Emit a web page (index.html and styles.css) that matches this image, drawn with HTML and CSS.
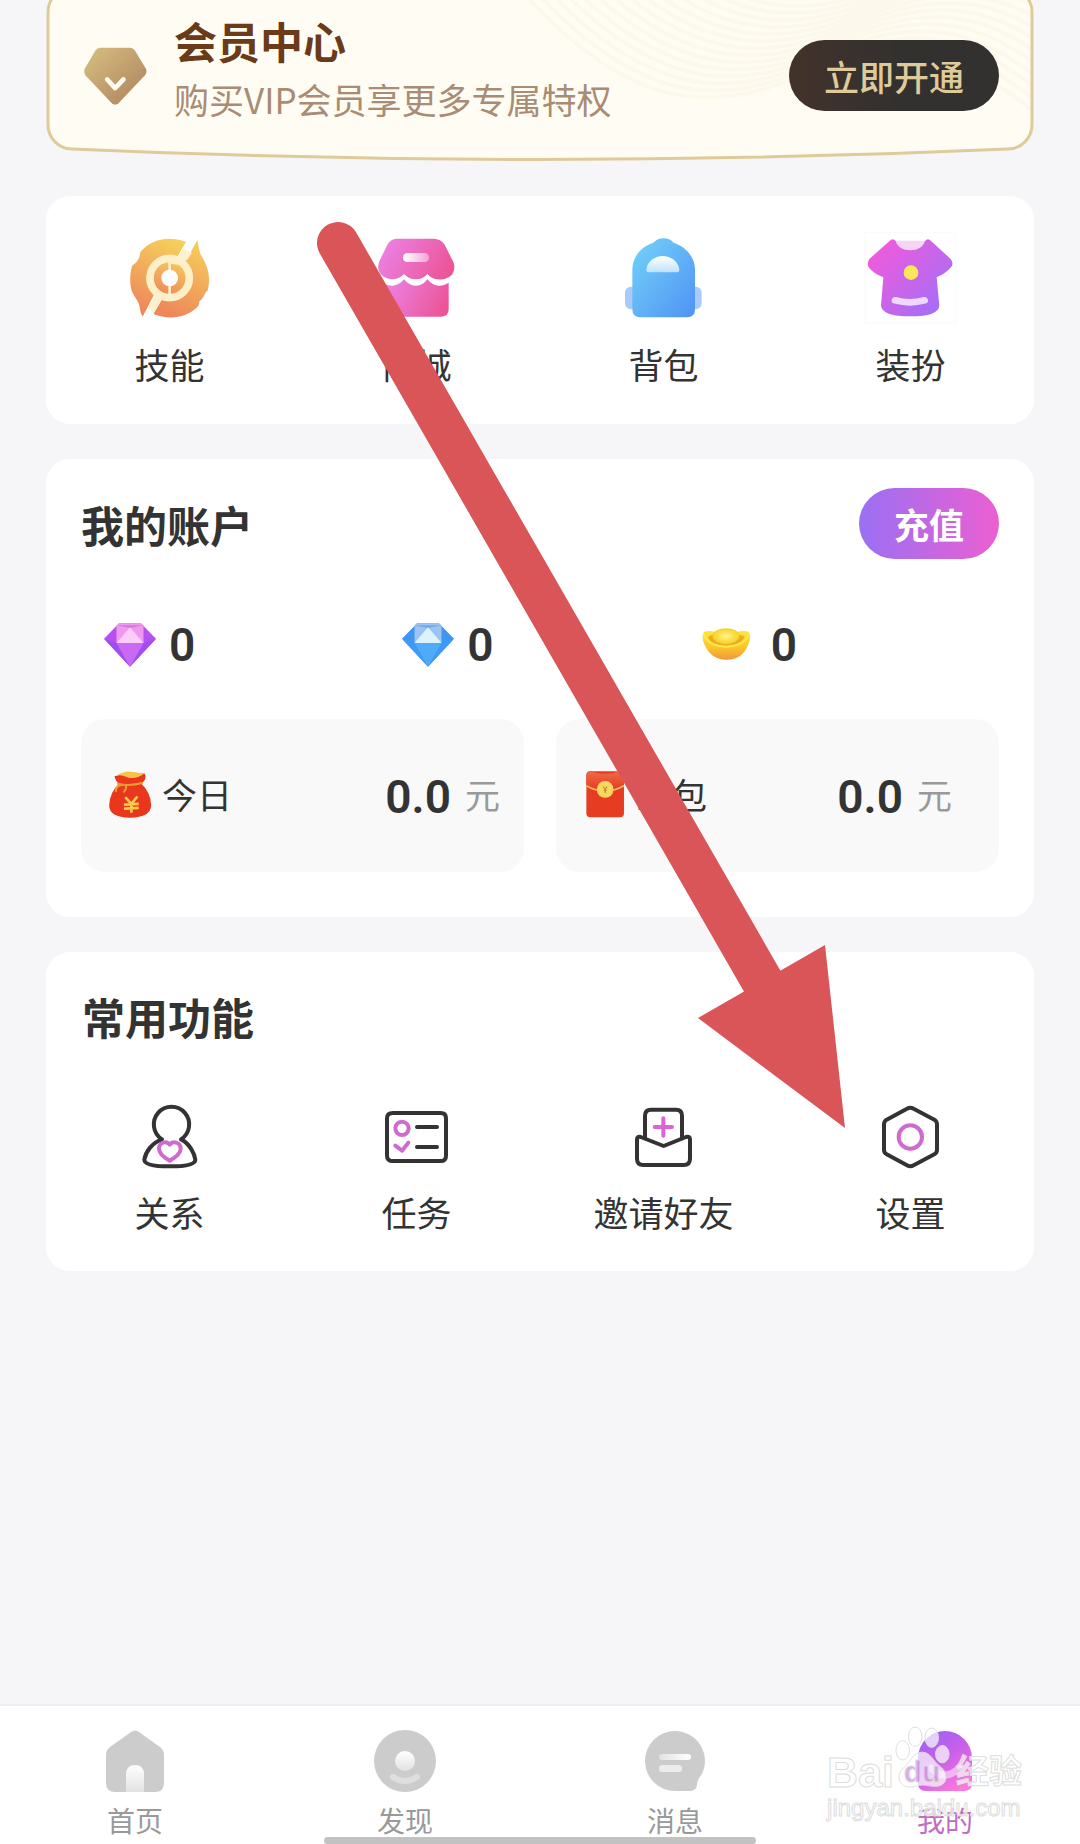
FILE: index.html
```html
<!DOCTYPE html>
<html lang="zh-CN">
<head>
    <meta charset="UTF-8">
    <meta name="viewport" content="width=device-width, initial-scale=1.0">
    <title>我的</title>
    <link rel="stylesheet" href="styles.css">
</head>
<body>
    <main class="container">
        <section class="vip-card">
            <svg class="vip-bg" viewBox="0 0 988 160" preserveAspectRatio="none" aria-hidden="true">
                <defs>
                    <clipPath id="vipClip"><path d="M2 12A24 24 0 0 1 26 -12H962A24 24 0 0 1 986 12V124A24 24 0 0 1 962 148Q494 169 26 148A24 24 0 0 1 2 124Z"/></clipPath>
                    <path id="wave" d="M484 0C540 60 600 97 660 97C740 97 780 50 860 52C920 54 960 90 1000 120"/>
                </defs>
                <path d="M2 12A24 24 0 0 1 26 -12H962A24 24 0 0 1 986 12V124A24 24 0 0 1 962 148Q494 169 26 148A24 24 0 0 1 2 124Z" fill="#fffdf3"/>
                <g clip-path="url(#vipClip)" fill="none" stroke="#fcf8ec" stroke-width="4">
                    <use href="#wave"/>
                    <use href="#wave" x="7" y="-7"/>
                    <use href="#wave" x="14" y="-14"/>
                    <use href="#wave" x="21" y="-21"/>
                    <use href="#wave" x="28" y="-28"/>
                    <use href="#wave" x="35" y="-35"/>
                    <use href="#wave" x="42" y="-42"/>
                    <use href="#wave" x="49" y="-49"/>
                    <use href="#wave" x="56" y="-56"/>
                    <use href="#wave" x="63" y="-63"/>
                    <use href="#wave" x="70" y="-70"/>
                    <use href="#wave" x="77" y="-77"/>
                    <use href="#wave" x="84" y="-84"/>
                    <use href="#wave" x="91" y="-91"/>
                </g>
                <path d="M2 12A24 24 0 0 1 26 -12H962A24 24 0 0 1 986 12V124A24 24 0 0 1 962 148Q494 169 26 148A24 24 0 0 1 2 124Z" fill="none" stroke="#dfcb9a" stroke-width="3"/>
            </svg>
            <svg class="vip-icon" viewBox="0 0 190 175" aria-hidden="true">
                <defs><linearGradient id="gold" x1="0" y1="0" x2="1" y2="1"><stop offset="0.1" stop-color="#d4ba7c"/><stop offset="0.8" stop-color="#b48c65"/></linearGradient></defs>
                <path d="M48 2H140Q148 2 153 10L186 64Q192 75 184 85L104 170Q94 178 84 170L4 85Q-2 75 3 64L35 10Q40 2 48 2Z" fill="url(#gold)"/>
                <path d="M70 98L94 124L119 98" fill="none" stroke="#fffdf3" stroke-width="14" stroke-linecap="round" stroke-linejoin="round"/>
            </svg>
            <div class="vip-text">
                <h2>会员中心</h2>
                <p>购买VIP会员享更多专属特权</p>
            </div>
            <button type="button" class="btn-open">立即开通</button>
        </section>

        <section class="card menu">
            <a href="#" class="menu-item">
                <svg class="icon-lg" viewBox="0 0 240 240" aria-hidden="true">
                    <defs><linearGradient id="fire" x1="0.75" y1="0" x2="0.4" y2="1"><stop offset="0" stop-color="#f6cf5c"/><stop offset="1" stop-color="#ee875a"/></linearGradient></defs>
                    <path d="M168 12C110 -10 60 8 31 42L29 54C22 74 14 76 6 84C-2 112 0 142 5 158C14 180 28 190 29 208Q31 226 38 236Z" fill="url(#fire)"/>
                    <path d="M202 6C206 18 206 44 218 60C240 96 240 130 233 158C222 164 226 176 208 190C208 200 206 204 202 207C166 242 116 246 70 228Z" fill="url(#fire)"/>
                    <path d="M168 14L200 8L172 62L146 52ZM38 236L70 228L96 180L72 170Z" fill="#fff"/>
                    <path d="M159 32L186 44L170 68L146 54ZM82 164L55 208L70 228L96 182Z" fill="#fdf1cd"/>
                    <circle cx="119" cy="120" r="59" fill="url(#fire)" stroke="#fdf0c8" stroke-width="23"/>
                    <path d="M119 62V176" stroke="#fdf0c8" stroke-width="8"/>
                    <path d="M122 62L146 80L124 78Z" fill="#fdf0c8"/>
                    <circle cx="119" cy="120" r="25" fill="#fff"/>
                </svg>
                <span>技能</span>
            </a>
            <a href="#" class="menu-item">
                <svg class="icon-lg" viewBox="-3 -2 240 240" aria-hidden="true">
                    <defs>
                        <linearGradient id="shop" x1="0" y1="0.3" x2="1" y2="0.6"><stop offset="0" stop-color="#eb82e6"/><stop offset="1" stop-color="#ec5496"/></linearGradient>
                        <linearGradient id="shine"><stop offset="0" stop-color="#fff"/><stop offset="1" stop-color="#fff" stop-opacity="0.4"/></linearGradient>
                    </defs>
                    <path d="M56 0H170Q190 2 200 18L226 70Q234 90 222 108Q205 124 180 122Q162 122 148 106Q135 122 113 122Q92 122 78 106Q64 122 40 122Q10 118 2 95Q-2 85 4 68L28 18Q38 0 56 0Z" fill="url(#shop)"/>
                    <path d="M14 134Q30 142 45 141Q66 138 78 122Q95 142 113 141Q135 141 148 122Q165 142 185 141Q200 140 212 132V212Q212 234 190 234H36Q14 234 14 212Z" fill="url(#shop)"/>
                    <rect x="75" y="43" width="78" height="27" rx="13" fill="url(#shine)"/>
                </svg>
                <span>商城</span>
            </a>
            <a href="#" class="menu-item">
                <svg class="icon-lg" viewBox="-3 0 240 240" aria-hidden="true">
                    <defs>
                        <linearGradient id="pack" x1="0.1" y1="0.1" x2="1" y2="1"><stop offset="0" stop-color="#6fcdf9"/><stop offset="1" stop-color="#5092f4"/></linearGradient>
                        <linearGradient id="flap" x1="0" y1="0" x2="0" y2="1"><stop offset="0" stop-color="#fff"/><stop offset="1" stop-color="#bfe2fc"/></linearGradient>
                    </defs>
                    <rect x="0" y="146" width="50" height="68" rx="18" fill="#a9cbfa"/>
                    <rect x="180" y="146" width="50" height="68" rx="18" fill="#a9cbfa"/>
                    <path d="M22 95C22 55 50 25 85 14Q98 1 115 1Q135 1 146 14C180 25 210 55 210 95V214Q210 238 186 238H46Q22 238 22 214Z" fill="url(#pack)"/>
                    <path d="M64 95C66 70 90 54 113 54C138 54 160 70 163 95Q163 103 155 103H72Q64 103 64 95Z" fill="url(#flap)"/>
                </svg>
                <span>背包</span>
            </a>
            <a href="#" class="menu-item">
                <svg class="icon-lg" viewBox="2 0 240 240" aria-hidden="true">
                    <defs><linearGradient id="shirt" x1="0.1" y1="0.1" x2="0.9" y2="0.8"><stop offset="0" stop-color="#f05bdc"/><stop offset="1" stop-color="#a86df6"/></linearGradient></defs>
                    <rect x="-16" y="-16" width="272" height="272" fill="none" stroke="#fbfbfb" stroke-width="4"/>
                    <path d="M74 8H166C156 46 84 46 74 8Z" fill="#f5d5f4"/>
                    <path d="M62 5Q70 1 76 9C86 46 154 46 164 9Q170 1 178 5L240 62Q252 75 242 88Q225 108 199 118L207 203Q204 235 121 235Q35 235 32 203L39 118Q10 108 -5 88Q-12 75 -2 62Z" fill="url(#shirt)"/>
                    <circle cx="122" cy="104" r="22" fill="#fbe85a"/>
                    <path d="M74 187Q119 199 163 187" fill="none" stroke="#fff" stroke-opacity="0.75" stroke-width="20" stroke-linecap="round"/>
                </svg>
                <span>装扮</span>
            </a>
        </section>

        <section class="card account">
            <div class="account-head">
                <h3>我的账户</h3>
                <button type="button" class="btn-recharge">充值</button>
            </div>
            <div class="coins">
                <div class="coin">
                    <svg class="coin-icon" viewBox="0 -12 158 156" aria-hidden="true">
                        <path d="M46 0H112L158 47L79 132L0 47Z" fill="#b850f0"/>
                        <path d="M0 47L38 60L79 132ZM158 47L120 60L79 132Z" fill="#a04df2"/>
                        <path d="M38 6L46 0H112L120 6V60H38Z" fill="#ee98ee"/>
                        <path d="M38 6H120L79 14Z" fill="#d277e8"/>
                        <path d="M79 12L120 60H38Z" fill="#fbcdf8"/>
                        <path d="M38 60H120L79 132Z" fill="#c96af5"/>
                    </svg>
                    <b>0</b>
                </div>
                <div class="coin">
                    <svg class="coin-icon" viewBox="0 -12 158 156" aria-hidden="true">
                        <path d="M46 0H112L158 47L79 132L0 47Z" fill="#3d96f2"/>
                        <path d="M0 47L38 60L79 132ZM158 47L120 60L79 132Z" fill="#3c9bf6"/>
                        <path d="M38 6L46 0H112L120 6V60H38Z" fill="#9cc4f3"/>
                        <path d="M38 6H120L79 14Z" fill="#6fa8ea"/>
                        <path d="M79 12L120 60H38Z" fill="#dcf2fd"/>
                        <path d="M38 60H120L79 132Z" fill="#4fabf7"/>
                    </svg>
                    <b>0</b>
                </div>
                <div class="coin coin-gold">
                    <svg class="coin-icon" viewBox="0 -26 158 156" aria-hidden="true">
                        <defs>
                            <linearGradient id="ingot" x1="0" y1="0" x2="0" y2="1"><stop offset="0" stop-color="#fdea3c"/><stop offset="0.6" stop-color="#fbc62c"/><stop offset="1" stop-color="#f0963a"/></linearGradient>
                            <radialGradient id="ingotTop"><stop offset="0" stop-color="#fff58c"/><stop offset="1" stop-color="#f8d023"/></radialGradient>
                        </defs>
                        <path d="M14 10Q30 8 42 12Q76 -6 110 12Q124 8 140 10Q152 14 148 38Q132 96 78 97Q24 96 6 38Q2 14 14 10Z" fill="url(#ingot)"/>
                        <path d="M22 26Q76 2 132 26Q124 52 76 54Q28 52 22 26Z" fill="#eeaa20"/>
                        <ellipse cx="76" cy="25" rx="41" ry="24" fill="url(#ingotTop)"/>
                        <path d="M8 20Q22 56 76 57Q130 56 146 20" fill="none" stroke="#fde94a" stroke-width="6"/>
                    </svg>
                    <b>0</b>
                </div>
            </div>
            <div class="wallets">
                <div class="wallet">
                    <svg class="wallet-icon" viewBox="0 0 128 140" aria-hidden="true">
                        <path d="M18 16Q64 0 108 8Q116 22 98 38Q126 64 127 102Q126 138 64 139Q2 138 2 102Q4 62 32 38Q20 30 18 16Z" fill="#e8371d"/>
                        <path d="M28 12Q50 -6 88 6Q104 4 104 10Q84 24 60 20Q42 12 28 12Z" fill="#f8c447"/>
                        <path d="M28 38Q64 46 100 36M44 42Q22 42 22 60M52 44Q54 54 46 62" fill="none" stroke="#ee9a2c" stroke-width="6" stroke-linecap="round"/>
                        <path d="M50 78L68 98L86 76M68 98V124M46 100L90 98M46 112L90 110" fill="none" stroke="#fccb4b" stroke-width="8"/>
                    </svg>
                    <span class="wallet-name">今日</span>
                    <b>0.0</b>
                    <span class="unit">元</span>
                </div>
                <div class="wallet wallet-packet">
                    <svg class="wallet-icon" viewBox="0 0 113 140" aria-hidden="true">
                        <defs><linearGradient id="packet" x1="0" y1="0" x2="0" y2="1"><stop offset="0" stop-color="#ee6a45"/><stop offset="1" stop-color="#e23a20"/></linearGradient></defs>
                        <rect x="1" y="1" width="112" height="137" rx="12" fill="#e63c22"/>
                        <path d="M1 13Q1 1 13 1Q56 16 101 1Q113 1 113 13V44Q56 76 1 44Z" fill="url(#packet)"/>
                        <path d="M1 44Q56 76 113 44" fill="none" stroke="#f7b75d" stroke-width="5"/>
                        <circle cx="57" cy="55" r="25" fill="#f9d75e"/>
                        <path d="M51 46L57 55L63 46M57 55V66M52 57H62" fill="none" stroke="#b9862d" stroke-width="3"/>
                    </svg>
                    <span class="wallet-name">红包</span>
                    <b>0.0</b>
                    <span class="unit">元</span>
                </div>
            </div>
        </section>

        <section class="card functions">
            <h3>常用功能</h3>
            <div class="menu menu-tools">
                <a href="#" class="menu-item">
                    <svg class="icon-md" viewBox="2 0 192 192" aria-hidden="true">
                        <path d="M74 103A53 53 0 1 1 131 103C158 116 172 148 174 164Q174 184 97 184Q21 184 21 164C25 140 45 112 74 103" stroke="#333"/>
                        <path d="M97 167C85 160 65 147 65 131C65 111 88 106 97 119C106 106 130 111 130 131C130 147 109 160 97 167Z" stroke="#cf6bd0"/>
                    </svg>
                    <span>关系</span>
                </a>
                <a href="#" class="menu-item">
                    <svg class="icon-md" viewBox="2 0 192 192" aria-hidden="true">
                        <path d="M26 24H169Q185 24 185 40V152Q185 168 169 168H26Q8 168 8 152V40Q8 24 26 24ZM98 66H158M98 126H158" stroke="#333"/>
                        <path d="M33 70A20 20 0 1 1 73 70A20 20 0 1 1 33 70ZM33 122L53 137L72 113" stroke="#cf6bd0"/>
                    </svg>
                    <span>任务</span>
                </a>
                <a href="#" class="menu-item">
                    <svg class="icon-md" viewBox="2 0 192 192" aria-hidden="true">
                        <path d="M41 100V32Q41 14 59 14H134Q152 14 152 32V100" stroke="#333"/>
                        <path d="M17 103Q17 93 28 96L97 123L164 96Q176 93 176 103V161Q176 180 157 180H36Q17 180 17 161Z" stroke="#333"/>
                        <path d="M70 66H122M96 40V92" stroke="#db65d6"/>
                    </svg>
                    <span>邀请好友</span>
                </a>
                <a href="#" class="menu-item">
                    <svg class="icon-md" viewBox="2 0 192 192" aria-hidden="true">
                        <path d="M86 11Q96 5 106 11L168 44Q176 49 176 58V134Q176 143 168 148L106 181Q96 187 86 181L25 148Q17 143 17 134V58Q17 49 25 44Z" stroke="#333"/>
                        <circle cx="96" cy="96" r="35" stroke="#cf6bd0"/>
                    </svg>
                    <span>设置</span>
                </a>
            </div>
        </section>
    </main>

    <nav class="tabbar">
        <a href="#" class="tab">
            <svg class="tab-icon" viewBox="0 0 62 62" aria-hidden="true">
                <defs><linearGradient id="fade" x1="0" y1="0" x2="0" y2="1"><stop offset="0" stop-color="#fff"/><stop offset="1" stop-color="#e2e2e2"/></linearGradient></defs>
                <path d="M27 2Q31 -1 35 2L56 17Q60 20 60 25V53Q60 62 51 62H11Q2 62 2 53V25Q2 20 6 17Z" fill="#ccc"/>
                <path d="M22 62V43Q23 35 31 35Q39 35 40 43V62Z" fill="url(#fade)"/>
            </svg>
            <span>首页</span>
        </a>
        <a href="#" class="tab">
            <svg class="tab-icon" viewBox="0 0 62 62" aria-hidden="true">
                <circle cx="31" cy="31" r="31" fill="#ccc"/>
                <circle cx="31" cy="31" r="10" fill="url(#fade)"/>
                <path d="M19 47Q31 55 43 47" fill="none" stroke="#dedede" stroke-width="6" stroke-linecap="round"/>
            </svg>
            <span>发现</span>
        </a>
        <a href="#" class="tab">
            <svg class="tab-icon" viewBox="0 0 62 62" aria-hidden="true">
                <defs><linearGradient id="line"><stop offset="0" stop-color="#e2e2e2"/><stop offset="1" stop-color="#fff"/></linearGradient></defs>
                <path d="M31 1A30 30 0 0 1 58 44Q53 50 53 54Q53 61 46 61H31A30 30 0 0 1 31 1Z" fill="#ccc"/>
                <rect x="15" y="24" width="32" height="6" rx="3" fill="url(#line)"/>
                <rect x="15" y="35" width="23" height="7" rx="3" fill="#ececec"/>
            </svg>
            <span>消息</span>
        </a>
        <a href="#" class="tab active">
            <svg class="tab-icon" viewBox="0 0 62 62" aria-hidden="true">
                <defs><linearGradient id="mine" x1="0.1" y1="0" x2="0.7" y2="1"><stop offset="0" stop-color="#9a62f4"/><stop offset="0.5" stop-color="#c95fea"/><stop offset="1" stop-color="#fb78dc"/></linearGradient></defs>
                <path d="M4 28A27 27 0 0 1 58 28V53Q58 61 50 61H12Q4 61 4 53Z" fill="url(#mine)"/>
                <path d="M17 38Q31 52 45 38" fill="none" stroke="#fff" stroke-opacity="0.5" stroke-width="7" stroke-linecap="round"/>
            </svg>
            <span>我的</span>
        </a>
    </nav>
    <div class="home-bar"></div>

    <div class="watermark">
        <div class="watermark-logo">
            <span>Bai</span>
            <svg class="paw" viewBox="0 0 60 66" aria-hidden="true">
                <ellipse cx="9" cy="25" rx="7" ry="10"/>
                <ellipse cx="22" cy="11" rx="7" ry="10"/>
                <ellipse cx="39" cy="12" rx="7" ry="10"/>
                <ellipse cx="50" cy="29" rx="7" ry="9"/>
                <path d="M29 27C20 27 18 36 10 43C2 50 4 63 16 63C24 63 24 61 30 61C36 61 38 63 46 62C56 60 56 48 48 42C40 36 38 27 29 27Z"/>
                <text x="29" y="58" text-anchor="middle">du</text>
            </svg>
            <span class="watermark-cn">经验</span>
        </div>
        <div class="watermark-url">jingyan.baidu.com</div>
    </div>

    <!-- arrow that points at 设置 -->
    <svg class="arrow" viewBox="0 0 1080 1844" aria-hidden="true">
        <path d="M338 243L765 986" stroke="#d95558" stroke-width="42" stroke-linecap="round"/>
        <path d="M698 1018L825 945L845 1128Z" fill="#d95558"/>
    </svg>
</body>
</html>
```

FILE: styles.css
```css
* {
    box-sizing: border-box;
}
body {
    font-family: "Noto Sans CJK SC", "Noto Sans", sans-serif;
    margin: 0;
    min-height: 100vh;
    display: flex;
    flex-direction: column;
    position: relative;
    background-color: #f6f6f9;
    color: #333;
    font-size: 35px;
    line-height: 48px;
}
h2, h3, p {
    margin: 0;
}
h2, h3 {
    font-size: 43px;
    font-weight: 700;
}
h3 {
    line-height: 60px;
}
a {
    color: inherit;
    text-decoration: none;
}
button {
    font-family: inherit;
    font-size: 35px;
    font-weight: 500;
    line-height: 71px;
    height: 71px;
    padding: 0 35px;
    border: none;
    border-radius: 36px;
    cursor: pointer;
}
svg {
    display: block;
    flex: none;
    overflow: visible;
}
.container {
    display: flex;
    flex-direction: column;
    gap: 35px;
    padding: 0 46px 35px;
}

/* vip */
.vip-card {
    position: relative;
    display: flex;
    align-items: center;
    padding: 14px 35px 24px 38px;
}
.vip-bg {
    position: absolute;
    top: 0;
    left: 0;
    width: 100%;
    height: 100%;
    z-index: -1;
}
.vip-icon {
    width: 63px;
    height: 58px;
}
.vip-text {
    flex: 1;
    margin-left: 27px;
    padding-bottom: 14px;
    color: #a88c75;
}
.vip-text h2 {
    color: #6a3a19;
    line-height: 52px;
    margin-bottom: 9px;
}
.btn-open {
    background: linear-gradient(to right, #43322a, #333130 50%);
    color: #dfcb9a;
}

/* cards */
.card {
    background-color: #fff;
    border-radius: 24px;
}
.menu {
    display: grid;
    grid-template-columns: repeat(4, 1fr);
    padding: 42px 0 36px;
}
.menu-item {
    display: flex;
    flex-direction: column;
    align-items: center;
    gap: 22px;
}
.icon-lg {
    width: 80px;
    height: 80px;
}
.icon-md {
    width: 64px;
    height: 64px;
    fill: none;
    stroke-width: 12px;
    stroke-linecap: round;
    stroke-linejoin: round;
}

/* account */
.account {
    padding: 29px 35px 45px;
}
.account-head {
    display: flex;
    align-items: center;
    justify-content: space-between;
}
.btn-recharge {
    background: linear-gradient(to right, #9a70f3, #ec5fd2);
    color: #fff;
    font-weight: 700;
}
b {
    font-family: Roboto, sans-serif;
    font-size: 46px;
    font-weight: 600;
    line-height: 56px;
}
.coins {
    display: grid;
    grid-template-columns: repeat(3, 1fr);
    padding: 58px 0 46px 23px;
}
.coin {
    display: flex;
    align-items: center;
    gap: 13px;
}
.coin-gold {
    gap: 18px;
}
.coin-icon {
    width: 52px;
    height: 52px;
}
.wallets {
    display: grid;
    grid-template-columns: repeat(2, 1fr);
    gap: 32px;
}
.wallet {
    display: flex;
    align-items: center;
    padding: 44px 24px 47px 27px;
    background-color: #f9f9f9;
    border-radius: 24px;
}
.wallet b {
    padding-top: 6px;
}
.wallet-packet {
    padding-right: 47px;
}
.wallet-icon {
    width: 44px;
    height: 47px;
}
.wallet-name {
    flex: 1;
    margin-left: 10px;
}
.unit {
    margin-left: 14px;
    color: #999;
}

/* functions */
.functions h3 {
    padding: 34px 36px 0;
}
.menu-tools {
    padding: 59px 0 35px;
}
.menu-tools .menu-item {
    gap: 19px;
}

/* bottom tabs */
.tabbar {
    display: grid;
    grid-template-columns: repeat(4, 1fr);
    margin-top: auto;
    padding: 24px 0 4px;
    background-color: #fff;
    border-top: 2px solid #efeff1;
}
.tab {
    display: flex;
    flex-direction: column;
    align-items: center;
    gap: 8px;
    font-size: 28px;
    line-height: 40px;
    color: #999;
}
.tab.active {
    color: #c06cc4;
}
.tab-icon {
    width: 62px;
    height: 62px;
}
.home-bar {
    position: absolute;
    left: 30%;
    bottom: 0;
    width: 40%;
    height: 7px;
    border-radius: 4px;
    background-color: #c2c2c2;
}

/* overlays */
.watermark {
    position: absolute;
    right: 58px;
    bottom: 22px;
    color: rgba(255, 255, 255, 0.7);
    font-family: "Liberation Sans", "Noto Sans CJK SC", sans-serif;
    -webkit-text-stroke: 1px #ddd;
    pointer-events: none;
}
.watermark-logo {
    display: flex;
    align-items: flex-end;
    font-size: 43px;
    font-weight: bold;
    line-height: 44px;
}
.watermark-logo .watermark-cn {
    font-size: 33px;
    margin-left: 4px;
}
.paw {
    width: 58px;
    height: 64px;
    margin-bottom: 4px;
    fill: rgba(255, 255, 255, 0.7);
    stroke: #ddd;
    font-size: 31px;
}
.paw text {
    fill: rgba(180, 90, 210, 0.5);
}
.watermark-url {
    font-size: 24px;
    line-height: 28px;
}
.arrow {
    position: absolute;
    top: 0;
    left: 0;
    width: 100%;
    pointer-events: none;
}
```
